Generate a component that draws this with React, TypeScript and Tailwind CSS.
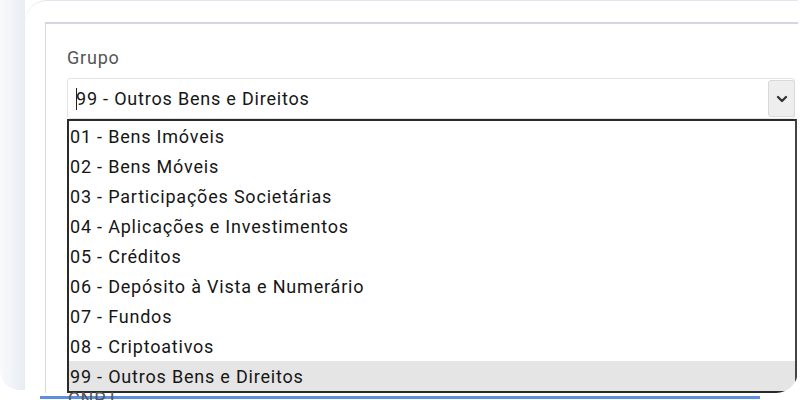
import { ChevronDown } from 'lucide-react';

const options = [
  '01 - Bens Imóveis',
  '02 - Bens Móveis',
  '03 - Participações Societárias',
  '04 - Aplicações e Investimentos',
  '05 - Créditos',
  '06 - Depósito à Vista e Numerário',
  '07 - Fundos',
  '08 - Criptoativos',
  '99 - Outros Bens e Direitos',
];

export default function App() {
  const selected = '99 - Outros Bens e Direitos';

  return (
    <div
      className="w-[800px] h-[400px] overflow-hidden bg-white flex relative"
      style={{ fontFamily: 'Roboto, "Liberation Sans", sans-serif' }}
    >
      {/* left shaded edge */}
      <div className="w-[25px] shrink-0 bg-gradient-to-r from-[#f8fafc] to-[#e8edf3] rounded-bl-[20px] mb-[10px]" />

      {/* screen */}
      <div className="flex-1 h-[393px] pt-[1px] bg-white rounded-tl-[22px] rounded-br-[22px] border-t border-[#e3e6ef] overflow-hidden mr-[2px]">
        <div className="ml-[20px] mt-[20px] h-[400px] border-l border-t-2 border-[#d4d6e0] pl-[21px] pr-[1px] pt-[22px] tracking-[0.8px]">
          <label className="block text-[18px] text-[#555] leading-[24px]">Grupo</label>

          <div className="mt-[8px] mr-[2px] h-[41px] flex items-stretch border border-[#e4e4e4] rounded-[3px]">
            <div className="flex-1 flex items-center pl-[8px] text-[18px] text-[#161616]">
              <span className="w-[1px] h-[22px] bg-[#222] -mr-[1px]" />
              {selected}
            </div>
            <div className="w-[27px] my-[1px] mr-[-1px] flex items-center justify-center bg-[#eeeeee] border border-[#d9d9d9] rounded-[3px]">
              <ChevronDown className="w-[16px] h-[16px] text-[#333]" strokeWidth={3.5} />
            </div>
          </div>

          <div className="border-2 border-[#2a2a2a] border-r-[#444]">
            {options.map((o) => (
              <div
                key={o}
                className={`h-[30px] flex items-center pl-[1px] text-[18px] text-[#161616] ${
                  o === selected ? 'bg-[#e5e5e5]' : ''
                }`}
              >
                {o}
              </div>
            ))}
          </div>
        </div>
      </div>

      {/* next field peeking below */}
      <div className="absolute left-[40px] w-[720px] bottom-[1px] h-[3px] bg-[#5b8fe0]" />
      <div className="absolute left-[68px] bottom-[-12px] text-[18px] text-[#555] tracking-[0.8px]">CNPJ</div>
    </div>
  );
}
